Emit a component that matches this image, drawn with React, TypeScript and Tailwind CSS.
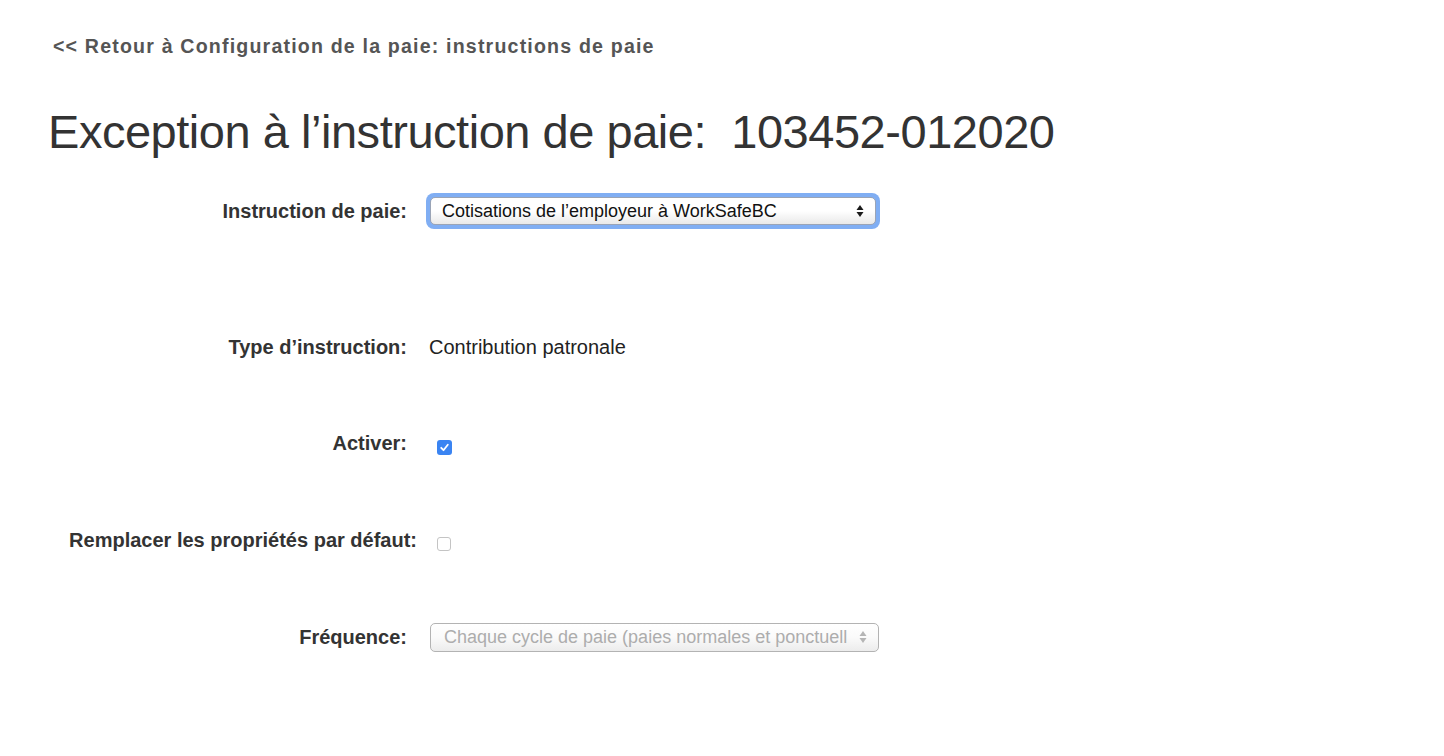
import React from 'react'

const font = { fontFamily: '"Liberation Sans", Arial, Helvetica, sans-serif' }

const Arrows = ({ muted }: { muted?: boolean }) => (
  <svg width="8" height="14" viewBox="0 0 8 14" className="shrink-0">
    <path d="M4 1 L7.5 6 L0.5 6 Z" fill={muted ? '#b5b5b5' : '#1a1a1a'} />
    <path d="M4 13 L7.5 8 L0.5 8 Z" fill={muted ? '#b5b5b5' : '#1a1a1a'} />
  </svg>
)

interface RowProps {
  label: string
  labelClass?: string
  rowClass?: string
  children: React.ReactNode
}

const Row: React.FC<RowProps> = ({ label, labelClass = '', rowClass = '', children }) => (
  <div className={`flex items-center ${rowClass}`}>
    <div
      className={`w-[407px] shrink-0 text-right text-[20px] font-bold text-[#333] whitespace-nowrap ${labelClass}`}
    >
      {label}
    </div>
    <div className="ml-[22px] flex items-center">{children}</div>
  </div>
)

export default function App() {
  return (
    <div className="min-h-[756px] w-full bg-white text-[#333]" style={font}>
      <div className="pt-[32px] pl-[53px]">
        <a className="text-[19.6px] font-bold tracking-[0.06em] text-[#555] cursor-pointer">
          &lt;&lt; Retour à Configuration de la paie: instructions de paie
        </a>
      </div>

      <h1 className="mt-[43px] pl-[48px] text-[47px] leading-[56px] text-[#333] tracking-[-0.01em]">
        Exception à l’instruction de paie:&nbsp; 103452-012020
      </h1>

      <div className="mt-[29px] flex flex-col">
        <Row label="Instruction de paie:" rowClass="h-[44px]">
          <div className="-ml-[3px] rounded-[8px] bg-[#80aef3] p-[4px]">
            <div className="flex h-[28px] w-[446px] items-center justify-between rounded-[5px] border border-[#9aa4b6] bg-gradient-to-b from-white via-white to-[#e9e9e9] pl-[11px] pr-[11px]">
              <span className="text-[18px] text-[#111]">Cotisations de l’employeur à WorkSafeBC</span>
              <Arrows />
            </div>
          </div>
        </Row>

        <Row label="Type d’instruction:" rowClass="mt-[94px] h-[40px]">
          <span className="text-[20px] text-[#222]">Contribution patronale</span>
        </Row>

        <Row label="Activer:" rowClass="mt-[56px] h-[40px]">
          <div className="ml-[8px] mt-[8px] flex h-[15px] w-[15px] items-center justify-center rounded-[3px] bg-[#3a84f2]">
            <svg width="11" height="11" viewBox="0 0 11 11">
              <path d="M2.2 5.8 L4.5 8.2 L8.8 2.8" stroke="white" strokeWidth="1.8" fill="none" strokeLinecap="round" strokeLinejoin="round" />
            </svg>
          </div>
        </Row>

        <Row label="Remplacer les propriétés par défaut:" labelClass="translate-x-[10px]" rowClass="mt-[57px] h-[40px]">
          <div className="ml-[8px] mt-[8px] h-[14px] w-[14px] rounded-[3px] border border-[#c4c4c4] bg-white" />
        </Row>

        <Row label="Fréquence:" rowClass="mt-[57px] h-[40px]">
          <div className="ml-[1px] flex h-[29px] w-[449px] items-center justify-between rounded-[5px] border border-[#b3b3b3] bg-gradient-to-b from-white via-[#fafafa] to-[#ececec] pl-[13px] pr-[11px]">
            <span className="overflow-hidden whitespace-nowrap text-[18px] text-[#adadad] w-[403px]">
              Chaque cycle de paie (paies normales et ponctuelles)
            </span>
            <Arrows muted />
          </div>
        </Row>
      </div>
    </div>
  )
}
